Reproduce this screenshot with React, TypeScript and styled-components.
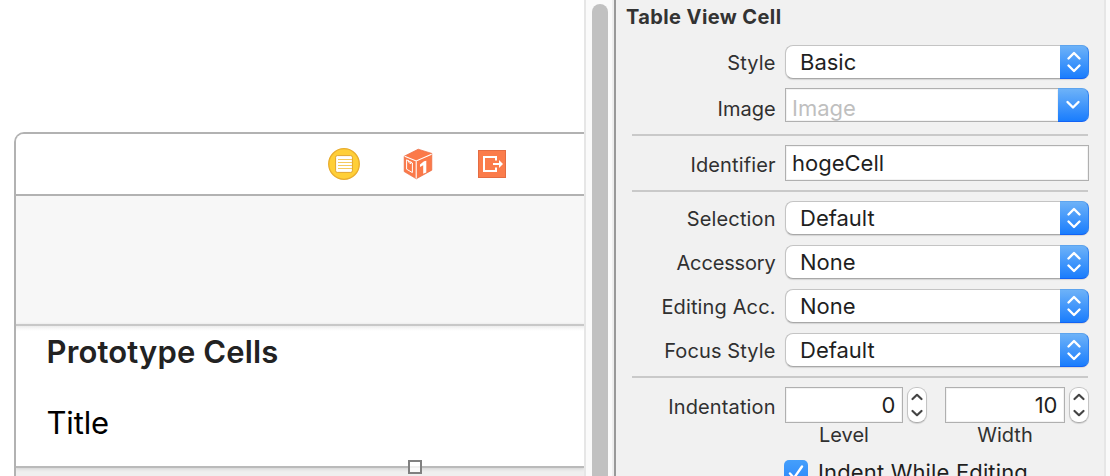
import React from 'react';
import styled, { createGlobalStyle } from 'styled-components';

const GlobalStyle = createGlobalStyle`
  *, *::before, *::after { box-sizing: border-box; }
  body {
    margin: 0;
    overflow: hidden;
    background: #fff;
    font-family: Inter, "Liberation Sans", sans-serif;
  }
`;

const Window = styled.div`
  display: flex;
  width: 1110px;
  height: 476px;
  overflow: hidden;
`;

/* ---------- Storyboard canvas ---------- */

const Canvas = styled.main`
  flex: none;
  width: 584px;
  height: 476px;
  padding: 132px 0 0 14px;
  overflow: hidden;
  background: #fff;
`;

const Scene = styled.section`
  position: relative;
  height: 360px;
  border: 2px solid #b2b2b2;
  border-right: 0;
  border-top-left-radius: 10px;
  overflow: hidden;
  background: #efefef;
`;

const SceneDock = styled.header`
  display: flex;
  align-items: center;
  height: 62px;
  padding-left: 312px;
  border-bottom: 2px solid #b2b2b2;
  background: #fff;

  svg { display: block; flex: none; }
  svg + svg { margin-left: 42px; }
`;

const NavigationArea = styled.div`
  height: 128px;
  background: #f7f7f7;
`;

const Prototype = styled.div`
  height: 144px;
  border-top: 2px solid #c8c8c8;
  border-bottom: 2px solid #bababa;
  padding-left: 30.5px;
  background: linear-gradient(#ececec, #fafafa 3px, #fff 5px);
  box-shadow: 0 1px 3px #d0d0d0;
`;

const PrototypeHeading = styled.h2`
  margin: 0;
  padding-top: 7px;
  font-size: 31px;
  line-height: 38px;
  font-weight: 600;
  letter-spacing: 0.15px;
  white-space: nowrap;
  color: #222;
`;

const CellTitle = styled.div`
  margin-top: 33px;
  font-size: 31px;
  line-height: 38px;
  letter-spacing: -0.15px;
  color: #000;
`;

const ResizeHandle = styled.span`
  position: absolute;
  left: 392px;
  top: 326px;
  width: 14px;
  height: 14px;
  border: 2px solid #808080;
  background: linear-gradient(#fff 4px, #eee 4px, #eee 6px, #fafafa 6px);
`;

const ScrollTrack = styled.div`
  flex: none;
  width: 30px;
  padding: 4px 4px 0 6px;
  border-left: 2px solid #e6e6e6;
  border-right: 2px solid #eee;
  background: #fafafa;
`;

const ScrollThumb = styled.div`
  width: 16px;
  height: 500px;
  border-radius: 8px;
  background: #c1c1c1;
`;

/* ---------- Inspector ---------- */

const Inspector = styled.aside`
  flex: none;
  width: 492px;
  padding: 0 15px 0 16px;
  border-left: 2px solid #999;
  border-right: 2px solid #e6e6e6;
  background: #f1f1f1;
`;

const Gutter = styled.div`
  flex: 1;
  background: #fafafa;
`;

const SectionTitle = styled.h1`
  height: 45px;
  margin: 0 0 0 -6px;
  padding-top: 4px;
  font-size: 20px;
  line-height: 26px;
  font-weight: 700;
  letter-spacing: 0.4px;
  color: #333;
`;

const Row = styled.div<{ $h?: number; $gap?: number }>`
  display: flex;
  height: ${(p) => p.$h ?? 34}px;
  margin-bottom: ${(p) => p.$gap ?? 10}px;
`;

const Label = styled.label<{ $track?: number; $top?: number }>`
  flex: none;
  width: 153px;
  padding: ${(p) => p.$top ?? 5}px 9.4px 0 0;
  font-size: 20px;
  line-height: 26px;
  letter-spacing: ${(p) => p.$track ?? 0.13}px;
  text-align: right;
  white-space: nowrap;
  color: #303030;
`;

const Divider = styled.hr`
  width: 456px;
  height: 2px;
  margin: 0 0 9px;
  border: 0;
  background: #c9c9c9;
`;

const PopUp = styled.button`
  display: flex;
  width: 304px;
  height: 34px;
  padding: 0;
  border: 1px solid #c4c4c4;
  border-bottom-color: #a8a8a8;
  border-right: 0;
  border-radius: 8px;
  background: #fff;
  box-shadow: 0 1px 1px rgba(0, 0, 0, 0.12);
  font-family: inherit;
`;

const PopUpValue = styled.span`
  flex: 1;
  padding: 3px 0 0 14px;
  text-align: left;
  font-size: 22px;
  line-height: 26px;
  color: #1f1f1f;
`;

const BlueCap = styled.span<{ $w: number }>`
  display: flex;
  align-items: center;
  justify-content: center;
  flex: none;
  width: ${(p) => p.$w}px;
  height: 34px;
  margin-top: -1px;
  border: solid;
  border-width: 1px 1px 1px 0;
  border-color: #5da4ee #2f80ef #1263f5 #3b8df5;
  border-radius: 0 7px 7px 0;
  background: linear-gradient(#6db2f8, #1a7dfd);
`;

const Field = styled.div<{ $w: number; $h: number; $right?: boolean; $muted?: boolean; $top?: number }>`
  flex: none;
  width: ${(p) => p.$w}px;
  height: ${(p) => p.$h}px;
  padding: ${(p) => p.$top ?? 4}px 6.5px 0 6px;
  border: 1px solid #b0b0b0;
  background: #fff;
  box-shadow: inset 0 0 0 1px #f3f3f3;
  text-align: ${(p) => (p.$right ? 'right' : 'left')};
  font-size: 22px;
  line-height: 26px;
  color: ${(p) => (p.$muted ? '#bfbfbf' : '#1f1f1f')};
`;

const ComboBox = styled.div`
  display: flex;
  width: 304px;

  ${Field} { border-right: 0; }
  ${BlueCap} { margin-top: 0; }
`;

const NumberGroup = styled.div<{ $w: number }>`
  display: grid;
  grid-template-columns: ${(p) => p.$w}px 20px;
  column-gap: 4px;
  align-content: start;
  margin-right: 18px;
`;

const Stepper = styled.span`
  display: flex;
  align-items: center;
  justify-content: center;
  height: 36px;
  border: 1px solid #c4c4c4;
  border-bottom-color: #adadad;
  border-radius: 9px;
  background: #fff;
  box-shadow: 0 1px 1px rgba(0, 0, 0, 0.12);
`;

const Caption = styled.span`
  font-size: 20px;
  line-height: 24px;
  text-align: center;
  color: #303030;
`;

const CheckRow = styled.div`
  display: flex;
  padding-left: 152px;
  margin-top: -1px;
`;

const CheckBox = styled.span`
  display: flex;
  align-items: center;
  justify-content: center;
  flex: none;
  width: 24px;
  height: 24px;
  border-radius: 5px;
  background: linear-gradient(#459ffb, #2a87fb);
`;

const CheckText = styled.span`
  padding-left: 10px;
  margin-top: -1px;
  font-size: 22px;
  line-height: 26px;
  letter-spacing: 0.15px;
  white-space: nowrap;
  color: #1f1f1f;
`;

/* ---------- Drawings ---------- */

const ControllerIcon = () => (
  <svg width="32" height="32" viewBox="0 0 32 32">
    <circle cx="16" cy="16" r="15.3" fill="#ffcf37" stroke="#e9ac2c" strokeWidth="1.3" />
    <rect x="7.6" y="7.6" width="16.8" height="16.8" rx="1.6" fill="#fff" stroke="#e2a52d" strokeWidth="1" />
    <path d="M10 11.5h14M10 14.5h14M10 17.5h14M10 20.5h14" stroke="#f3c44e" strokeWidth=".9" />
  </svg>
);

const ResponderIcon = () => (
  <svg width="32" height="32" viewBox="0 0 32 32">
    <path d="M16.2 1.2 29.8 5.4V22.2L14.3 30.8 2.2 23.6V8.2Z" fill="#fb7949" stroke="#e96a40" strokeWidth=".7" />
    <path d="M2.6 8.2 14.2 13 29.6 6.2M14.2 13V30.6" fill="none" stroke="#fff" strokeWidth="1.1" />
    <path d="M4.6 11.8 10.4 15V24.6L4.6 21.2Z" fill="none" stroke="#fff" strokeWidth="1" />
    <path d="M6.6 14.4 9 15.800M6.400 12.200v2M8.900 13.500v2.200" fill="none" stroke="#fff" strokeWidth=".9" />
    <path d="M18 16.400 22 13.200 24.300 12.800V24.400L21.200 25.800V17.200L18 18.900Z" fill="#fff" />
  </svg>
);

const ExitIcon = () => (
  <svg width="32" height="32" viewBox="0 0 32 32">
    <rect x="2.5" y="2.5" width="27" height="27" fill="#fb7c4b" stroke="#e46c42" />
    <path d="M20 12.500V9H8v14h12v-3.500" fill="none" stroke="#fff" strokeWidth="2" />
    <path d="M17 15h6v-3l4 4-4 4v-3h-6z" fill="#fff" />
  </svg>
);

const UpDownIcon = () => (
  <svg width="16" height="24" viewBox="0 0 16 24" fill="none" stroke="#fff" strokeWidth="2.4" strokeLinecap="round" strokeLinejoin="round">
    <path d="M2.5 8.5 8 3l5.5 5.5M2.5 15.5 8 21l5.5-5.5" />
  </svg>
);

const DownIcon = () => (
  <svg width="16" height="12" viewBox="0 0 16 12" fill="none" stroke="#fff" strokeWidth="2.4" strokeLinecap="round" strokeLinejoin="round">
    <path d="M2.5 3 8 8.5 13.5 3" />
  </svg>
);

const StepperIcon = () => (
  <svg width="14" height="26" viewBox="0 0 14 26" fill="none" stroke="#444" strokeWidth="2.2" strokeLinecap="round" strokeLinejoin="round">
    <path d="M2.5 7 7 2.8 11.5 7M2.5 19 7 23.2l4.5-4.2" />
  </svg>
);

const CheckIcon = () => (
  <svg width="20" height="20" viewBox="0 0 20 20" fill="none" stroke="#fff" strokeWidth="2.4" strokeLinecap="round" strokeLinejoin="round">
    <path d="M4 11.5 8 16 16 4.5" />
  </svg>
);

/* ---------- Composition ---------- */

interface PopUpRowProps {
  label: string;
  value: string;
  track?: number;
  gap?: number;
}

const PopUpRow = ({ label, value, track, gap }: PopUpRowProps) => (
  <Row $gap={gap}>
    <Label $track={track}>{label}</Label>
    <PopUp>
      <PopUpValue>{value}</PopUpValue>
      <BlueCap $w={29}><UpDownIcon /></BlueCap>
    </PopUp>
  </Row>
);

export default function App() {
  return (
    <Window>
      <GlobalStyle />
      <Canvas>
        <Scene>
          <SceneDock>
            <ControllerIcon />
            <ResponderIcon />
            <ExitIcon />
          </SceneDock>
          <NavigationArea />
          <Prototype>
            <PrototypeHeading>Prototype Cells</PrototypeHeading>
            <CellTitle>Title</CellTitle>
          </Prototype>
          <ResizeHandle />
        </Scene>
      </Canvas>
      <ScrollTrack><ScrollThumb /></ScrollTrack>
      <Inspector>
        <SectionTitle>Table View Cell</SectionTitle>
        <PopUpRow label="Style" value="Basic" gap={9} />
        <Row $gap={12}>
          <Label $track={0} $top={8}>Image</Label>
          <ComboBox>
            <Field $w={273} $h={34} $top={6} $muted>Image</Field>
            <BlueCap $w={31}><DownIcon /></BlueCap>
          </ComboBox>
        </Row>
        <Divider />
        <Row $h={36} $gap={9}>
          <Label $top={7}>Identifier</Label>
          <Field $w={304} $h={36}>hogeCell</Field>
        </Row>
        <Divider />
        <PopUpRow label="Selection" value="Default" />
        <PopUpRow label="Accessory" value="None" track={-0.15} />
        <PopUpRow label="Editing Acc." value="None" />
        <PopUpRow label="Focus Style" value="Default" gap={9} />
        <Divider />
        <Row $h={74} $gap={0}>
          <Label $top={7}>Indentation</Label>
          <NumberGroup $w={118}>
            <Field $w={118} $h={36} $right>0</Field>
            <Stepper><StepperIcon /></Stepper>
            <Caption>Level</Caption>
          </NumberGroup>
          <NumberGroup $w={120}>
            <Field $w={120} $h={36} $right>10</Field>
            <Stepper><StepperIcon /></Stepper>
            <Caption>Width</Caption>
          </NumberGroup>
        </Row>
        <CheckRow>
          <CheckBox><CheckIcon /></CheckBox>
          <CheckText>Indent While Editing</CheckText>
        </CheckRow>
      </Inspector>
      <Gutter />
    </Window>
  );
}
